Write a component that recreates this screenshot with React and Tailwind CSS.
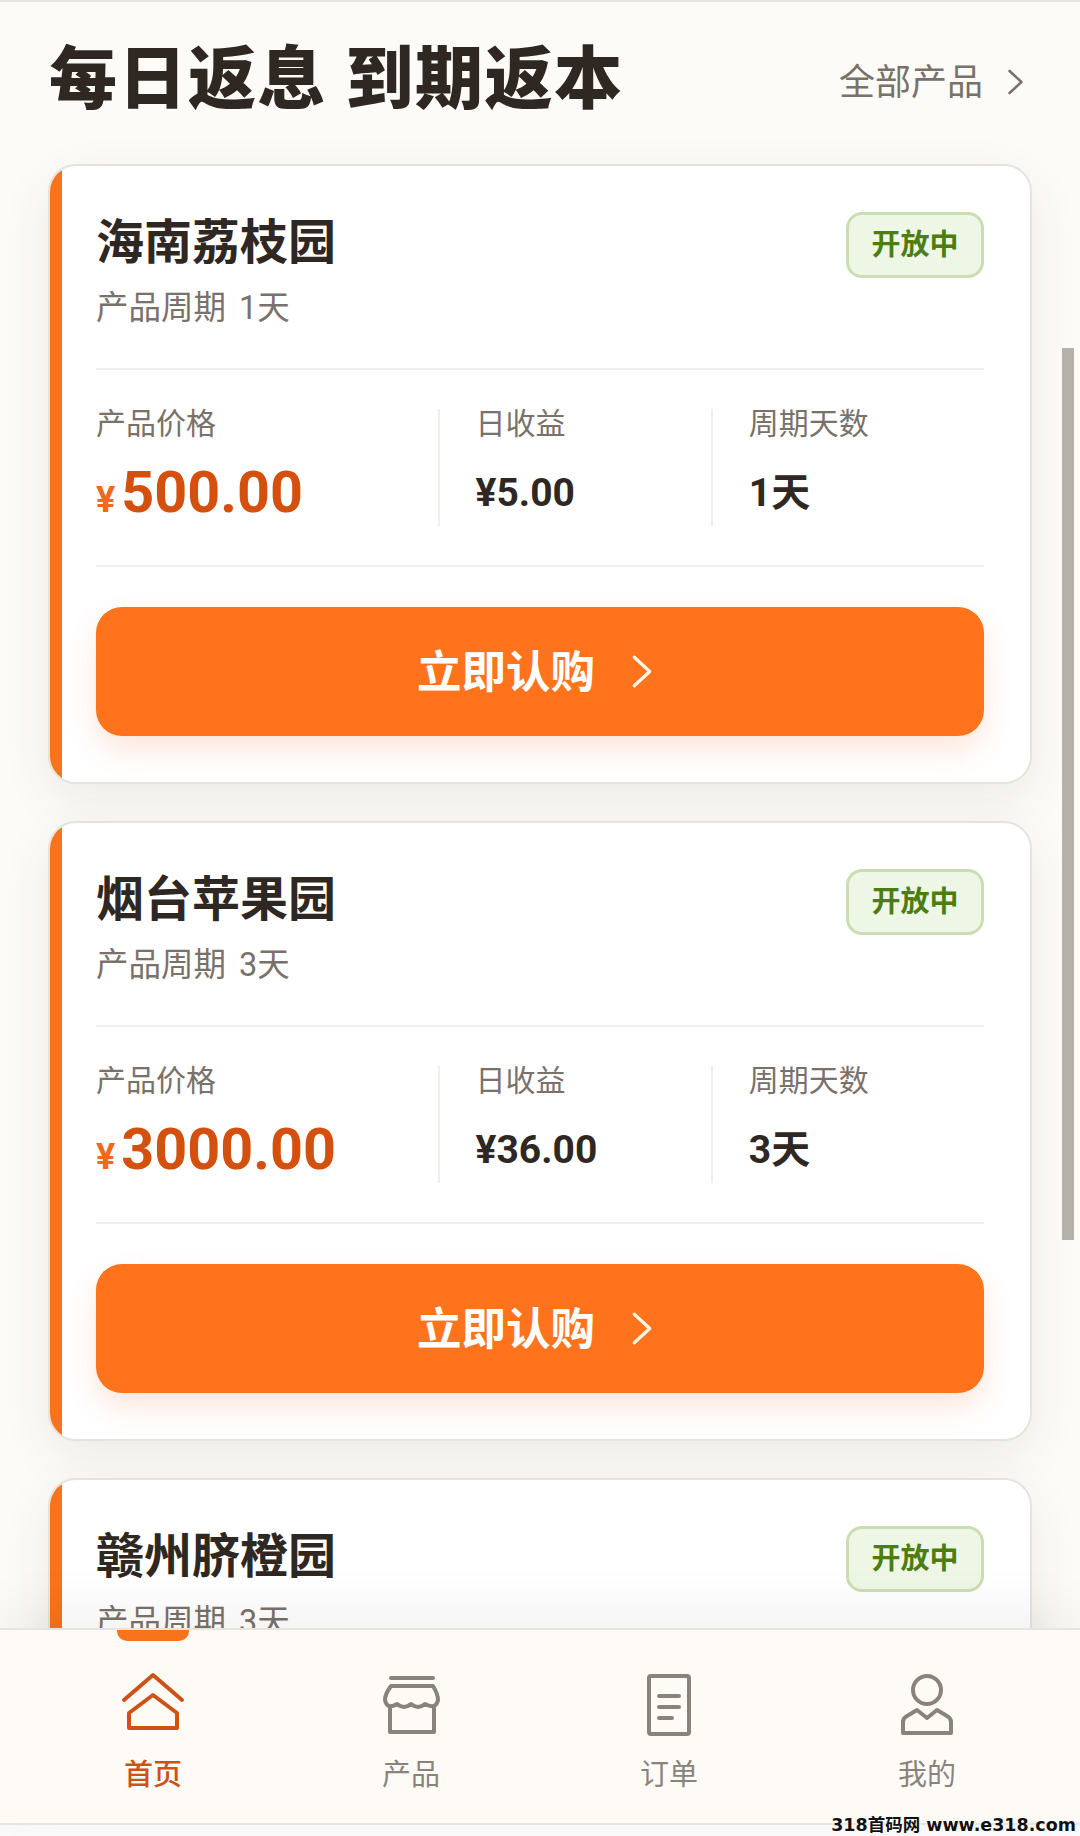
const products = [
  { name: '海南荔枝园', days: 1, price: '500.00', daily: '¥5.00' },
  { name: '烟台苹果园', days: 3, price: '3000.00', daily: '¥36.00' },
  { name: '赣州脐橙园', days: 3, price: '3000.00', daily: '¥36.00' },
];

function Chevron({ className }) {
  return (
    <svg viewBox="0 0 20 32" fill="none" stroke="currentColor" strokeWidth="3" strokeLinecap="round" strokeLinejoin="round" className={className}>
      <path d="M3 3 L17 16 L3 29" />
    </svg>
  );
}

function ProductCard({ item }) {
  return (
    <article className="relative overflow-hidden rounded-[28px] border-2 border-[#e5e3db] bg-white p-[46px] shadow-[0_16px_50px_rgba(70,50,30,0.08)]">
      <div className="absolute inset-y-0 left-0 w-[12px] bg-[#f9731a]" />
      <div className="flex h-[156px] items-start justify-between">
        <div>
          <h2 className="text-[48px] leading-[62px] font-bold text-[#2f2722]">{item.name}</h2>
          <p className="mt-[12px] text-[32.5px] leading-[44px] [word-spacing:5px] text-[#7a716a]">产品周期 {item.days}天</p>
        </div>
        <span className="flex h-[66px] w-[138px] items-center justify-center rounded-[16px] border-[3px] border-[#cbddb2] bg-[#eef6e5] pt-[2px] text-[29px] font-bold text-[#4d7c0f]">开放中</span>
      </div>
      <div className="grid grid-cols-[1.25fr_1fr_1fr] border-y-2 border-[#f0efec] py-[39px]">
        <div className="h-[117px]">
          <div className="text-[30px] leading-[30px] text-[#7a716a]">产品价格</div>
          <div className="mt-[24px] flex h-[60px] items-baseline">
            <span className="mr-[6px] text-[36px] leading-[60px] font-bold text-[#ef6a1c]">¥</span>
            <span className="text-[57.5px] leading-[60px] font-bold text-[#d4500f]">{item.price}</span>
          </div>
        </div>
        <div className="h-[117px] border-l-2 border-[#f0efec] pl-[36px]">
          <div className="text-[30px] leading-[30px] text-[#7a716a]">日收益</div>
          <div className="mt-[24px] flex h-[60px] items-center text-[39px] font-bold text-[#2f2722]">{item.daily}</div>
        </div>
        <div className="h-[117px] border-l-2 border-[#f0efec] pl-[36px]">
          <div className="text-[30px] leading-[30px] text-[#7a716a]">周期天数</div>
          <div className="mt-[24px] flex h-[60px] items-center text-[39px] font-bold text-[#2f2722]">{item.days}天</div>
        </div>
      </div>
      <button className="mt-[40px] flex h-[129px] w-full items-center justify-center gap-[36px] rounded-[26px] bg-[#fe731c] pr-[10px] text-[44.5px] font-bold text-white shadow-[0_14px_30px_rgba(240,100,40,0.16)]">
        <span className="pt-[3px]">立即认购</span>
        <Chevron className="h-[37px] w-[22px] text-[#fff6ea]" />
      </button>
    </article>
  );
}

function HomeIcon() {
  return (
    <svg viewBox="0 0 64 64" fill="none" stroke="currentColor" strokeWidth="4" strokeLinecap="round" strokeLinejoin="round" className="h-[64px] w-[64px]">
      <path d="M3 28 L32 3 L61 28" />
      <path d="M32 23 L56 41 V56 H8 V41 Z" />
    </svg>
  );
}

function StoreIcon() {
  return (
    <svg viewBox="0 0 64 64" fill="none" stroke="currentColor" strokeWidth="4" strokeLinecap="round" strokeLinejoin="round" className="h-[64px] w-[64px]">
      <path d="M12 6 H54" />
      <path d="M12 14 H54 Q59 22 59 28 Q57 38 46 32 Q39 38 32 32 Q25 38 18 32 Q8 38 6 28 Q6 22 12 14 Z" />
      <path d="M11 36 V60 H55 V36" />
    </svg>
  );
}

function OrderIcon() {
  return (
    <svg viewBox="0 0 64 64" fill="none" stroke="currentColor" strokeWidth="4" strokeLinecap="round" strokeLinejoin="round" className="h-[64px] w-[64px]">
      <rect x="12" y="4" width="40" height="58" rx="2" />
      <path d="M22 24 H42 M22 35 H42 M22 46 H35" />
    </svg>
  );
}

function UserIcon() {
  return (
    <svg viewBox="0 0 64 64" fill="none" stroke="currentColor" strokeWidth="4" strokeLinecap="round" strokeLinejoin="round" className="h-[64px] w-[64px]">
      <circle cx="32" cy="18" r="14" />
      <path d="M8 61 V50 Q8 46 12 44 L22 38 L32 46 L42 38 L52 44 Q56 46 56 50 V61 Z" />
    </svg>
  );
}

const tabs = [
  { label: '首页', icon: HomeIcon, active: true },
  { label: '产品', icon: StoreIcon },
  { label: '订单', icon: OrderIcon },
  { label: '我的', icon: UserIcon },
];

export default function App() {
  return (
    <div className="relative flex h-[1836px] w-[1080px] flex-col overflow-hidden border-t-2 border-[#e8e5e0] bg-[#fdfbf8] font-[family-name:Roboto,'Noto_Sans_CJK_SC',sans-serif]">
      <main className="min-h-0 flex-1 overflow-hidden px-[48px]">
        <header className="flex h-[162px] items-start justify-between pt-[30px]">
          <h1 className="ml-px text-[68px] leading-[96px] font-black tracking-[1.5px] text-[#2f2722]">每日返息 到期返本</h1>
          <div className="mt-[18px] mr-[8px] flex items-center gap-[24px] text-[36px] leading-[66px] text-[#7a716a]">
            <span>全部产品</span>
            <Chevron className="-mt-[3px] h-[30px] w-[17px]" />
          </div>
        </header>
        <div className="flex flex-col gap-[37px]">
          {products.map((item) => (
            <ProductCard key={item.name} item={item} />
          ))}
        </div>
      </main>

      <nav className="relative z-10 grid h-[195px] shrink-0 grid-cols-4 border-t-2 border-[#e7e4de] bg-[#fefbf7] px-[24px] shadow-[0_-20px_50px_rgba(0,0,0,0.05)]">
        {tabs.map((tab) => {
          const Icon = tab.icon;
          return (
            <div key={tab.label} className={`relative flex flex-col items-center pt-[42px] ${tab.active ? 'text-[#cc5217]' : 'text-[#8a837c]'}`}>
              {tab.active && <div className="absolute top-0 h-[11px] w-[72px] rounded-b-[10px] bg-[#f9731a]" />}
              <Icon />
              <span className={`mt-[24px] text-[29px] leading-[30px] ${tab.active ? 'font-medium' : ''}`}>{tab.label}</span>
            </div>
          );
        })}
      </nav>
      <div className="h-[13px] shrink-0 border-t-2 border-[#e6e6e6] bg-[#fafafa]" />

      <div className="absolute top-[346px] left-[1062px] h-[892px] w-[12px] bg-[#b5b0aa]" />
      <div className="absolute right-[4px] bottom-[1px] z-20 font-[family-name:'DejaVu_Sans','Noto_Sans_CJK_SC',sans-serif] text-[17.5px] leading-[20px] font-bold text-[#111] [text-shadow:0_0_3px_#fff,0_0_3px_#fff]">318首码网 www.e318.com</div>
    </div>
  );
}
